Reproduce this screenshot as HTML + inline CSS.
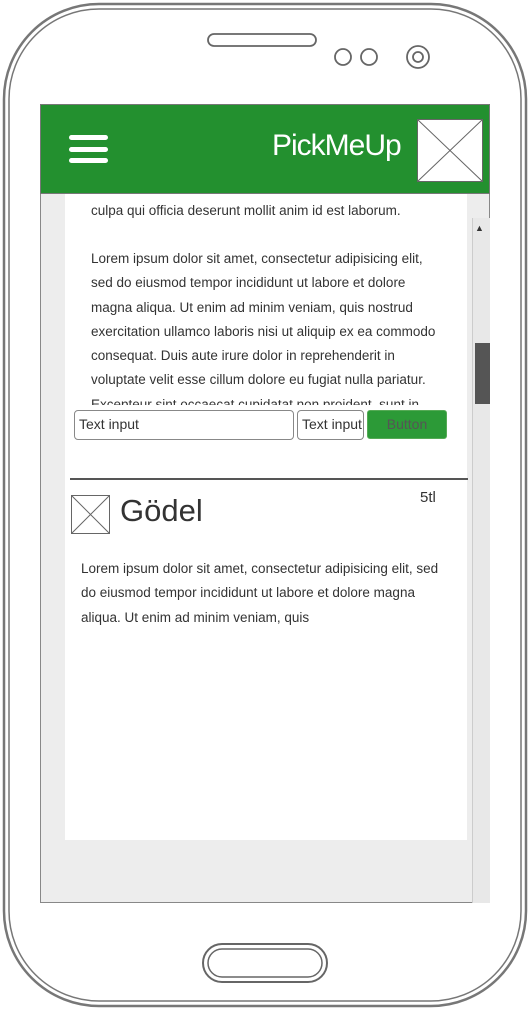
<!DOCTYPE html>
<html><head><meta charset="utf-8"><style>
*{margin:0;padding:0;box-sizing:border-box}
body{width:530px;height:1010px;background:#fff;position:relative;overflow:hidden;font-family:"Liberation Sans",sans-serif;color:#333}
.abs{position:absolute}
.txt{font-size:13.5px;line-height:24.3px;color:#333;letter-spacing:0;white-space:nowrap}
</style></head><body>
<svg class="abs" style="left:0;top:0" width="530" height="1010">
<rect x="4" y="4" width="522" height="1002" rx="95" fill="none" stroke="#777" stroke-width="2.5"/>
<rect x="9" y="9" width="512" height="992" rx="90" fill="none" stroke="#777" stroke-width="1.5"/>
<rect x="208" y="34" width="108" height="12" rx="6" fill="none" stroke="#666" stroke-width="1.8"/>
<circle cx="343" cy="57" r="8" fill="none" stroke="#666" stroke-width="1.8"/>
<circle cx="369" cy="57" r="8" fill="none" stroke="#666" stroke-width="1.8"/>
<circle cx="418" cy="57" r="11" fill="none" stroke="#666" stroke-width="1.8"/>
<circle cx="418" cy="57" r="5" fill="none" stroke="#666" stroke-width="1.8"/>
<rect x="203" y="944" width="124" height="38" rx="19" fill="none" stroke="#666" stroke-width="2"/>
<rect x="208" y="949" width="114" height="28" rx="14" fill="none" stroke="#666" stroke-width="1.5"/>
</svg>
<div class="abs" style="left:40px;top:104px;width:450px;height:799px;background:#ededed;border:1.5px solid #888"></div>
<div class="abs" style="left:65px;top:194px;width:402px;height:646px;background:#fff"></div>
<div class="abs" style="left:40px;top:104px;width:450px;height:90px;background:#23902f;border:1.5px solid #777"></div>
<div class="abs" style="left:69px;top:135px;width:39px;height:5px;background:#fff;border-radius:3px"></div>
<div class="abs" style="left:69px;top:147px;width:39px;height:5px;background:#fff;border-radius:3px"></div>
<div class="abs" style="left:69px;top:158px;width:39px;height:5px;background:#fff;border-radius:3px"></div>
<div class="abs" style="left:272px;top:129px;color:#fff;font-size:30px;letter-spacing:-1px">PickMeUp</div>
<svg class="abs" style="left:417px;top:119px" width="66" height="63"><rect x="0.5" y="0.5" width="65" height="62" fill="#fff" stroke="#666"/><path d="M0 0L66 63M66 0L0 63" stroke="#666"/></svg>
<div class="abs" style="left:472px;top:218px;width:18px;height:685px;background:#e8e8e8;border-left:1px solid #ccc"></div>
<div class="abs" style="left:475px;top:223px;font-size:9px;color:#333">▲</div>
<div class="abs" style="left:475px;top:343px;width:15px;height:61px;background:#555"></div>
<div class="abs txt" style="left:91px;top:199px">culpa qui officia deserunt mollit anim id est laborum.</div>
<div class="abs txt" style="left:91px;top:247px;height:158px;overflow:hidden">Lorem ipsum dolor sit amet, consectetur adipisicing elit,<br>sed do eiusmod tempor incididunt ut labore et dolore<br>magna aliqua. Ut enim ad minim veniam, quis nostrud<br>exercitation ullamco laboris nisi ut aliquip ex ea commodo<br>consequat. Duis aute irure dolor in reprehenderit in<br>voluptate velit esse cillum dolore eu fugiat nulla pariatur.<br>Excepteur sint occaecat cupidatat non proident, sunt in</div>
<div class="abs" style="left:74px;top:410px;width:220px;height:30px;border:1.5px solid #888;border-radius:4px;background:#fff;font-size:14px;padding:5px 4px">Text input</div>
<div class="abs" style="left:297px;top:410px;width:67px;height:30px;border:1.5px solid #888;border-radius:4px;background:#fff;font-size:14px;padding:5px 4px;overflow:hidden;white-space:nowrap">Text input</div>
<div class="abs" style="left:367px;top:410px;width:80px;height:29px;background:#2c9a37;border:1px solid #5a5;border-radius:3px;color:#555;font-size:14px;text-align:center;padding-top:5px">Button</div>
<div class="abs" style="left:70px;top:478px;width:398px;height:2px;background:#555"></div>
<svg class="abs" style="left:71px;top:495px" width="39" height="39"><rect x="0.5" y="0.5" width="38" height="38" fill="#fff" stroke="#666"/><path d="M0 0L39 39M39 0L0 39" stroke="#666"/></svg>
<div class="abs" style="left:120px;top:493px;font-size:31px;color:#333">Gödel</div>
<div class="abs" style="left:420px;top:489px;font-size:15px;color:#333">5tl</div>
<div class="abs txt" style="left:81px;top:557px">Lorem ipsum dolor sit amet, consectetur adipisicing elit, sed<br>do eiusmod tempor incididunt ut labore et dolore magna<br>aliqua. Ut enim ad minim veniam, quis</div>
</body></html>
